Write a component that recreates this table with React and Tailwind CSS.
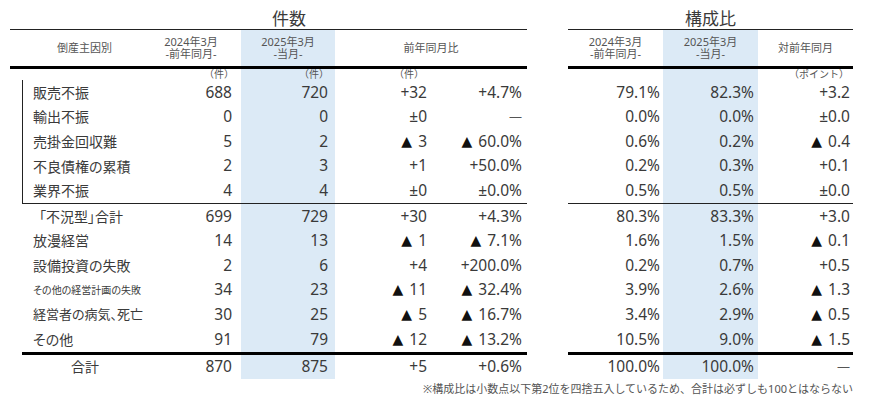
import React from "react";

const rows1 = [
  ["販売不振", "688", "720", "+32", "+4.7%", "79.1%", "82.3%", "+3.2"],
  ["輸出不振", "0", "0", "±0", "—", "0.0%", "0.0%", "±0.0"],
  ["売掛金回収難", "5", "2", "▲ 3", "▲ 60.0%", "0.6%", "0.2%", "▲ 0.4"],
  ["不良債権の累積", "2", "3", "+1", "+50.0%", "0.2%", "0.3%", "+0.1"],
  ["業界不振", "4", "4", "±0", "±0.0%", "0.5%", "0.5%", "±0.0"],
];
const rows2 = [
  ["「不況型」合計", "699", "729", "+30", "+4.3%", "80.3%", "83.3%", "+3.0", "sum"],
  ["放漫経営", "14", "13", "▲ 1", "▲ 7.1%", "1.6%", "1.5%", "▲ 0.1"],
  ["設備投資の失敗", "2", "6", "+4", "+200.0%", "0.2%", "0.7%", "+0.5"],
  ["その他の経営計画の失敗", "34", "23", "▲ 11", "▲ 32.4%", "3.9%", "2.6%", "▲ 1.3", "small"],
  ["経営者の病気、死亡", "30", "25", "▲ 5", "▲ 16.7%", "3.4%", "2.9%", "▲ 0.5", "long"],
  ["その他", "91", "79", "▲ 12", "▲ 13.2%", "10.5%", "9.0%", "▲ 1.5"],
];
const total = ["合計", "870", "875", "+5", "+0.6%", "100.0%", "100.0%", "—"];

function V({ s }) {
  if (s.startsWith("▲ ")) {
    return (
      <span className="whitespace-nowrap">
        <span className="font-['DejaVu_Sans',sans-serif] text-[14px] mr-[6px] text-[#111] relative top-[-1px]">▲</span>
        {s.slice(2)}
      </span>
    );
  }
  if (s === "—") {
    return <span className="text-[13px] text-[#555]">—</span>;
  }
  return <span className="whitespace-nowrap">{s}</span>;
}

function LeftRow({ r, labelW, labelCls }) {
  return (
    <div className="flex h-[24.6px] items-center text-[15.5px]">
      <div className={`h-full flex items-center whitespace-nowrap [font-feature-settings:'palt'] ${labelW} ${labelCls}`}>{r[0]}</div>
      <div className="h-full w-[100px] flex items-center justify-end pr-[9px]"><V s={r[1]} /></div>
      <div className="h-full w-[94px] flex items-center justify-end pr-[7px] bg-[#dceaf6]"><V s={r[2]} /></div>
      <div className="h-full w-[95px] flex items-center justify-end pr-[3px]"><V s={r[3]} /></div>
      <div className="h-full w-[97px] flex items-center justify-end pr-[5px]"><V s={r[4]} /></div>
    </div>
  );
}

function RightRow({ r }) {
  return (
    <div className="flex h-[24.6px] items-center text-[15.5px]">
      <div className="h-full w-[95px] flex items-center justify-end pr-[3px]"><V s={r[5]} /></div>
      <div className="h-full w-[95px] flex items-center justify-end pr-[4px] bg-[#dceaf6]"><V s={r[6]} /></div>
      <div className="h-full w-[95px] flex items-center justify-end pr-[3px]"><V s={r[7]} /></div>
    </div>
  );
}

function labelClass(r) {
  if (r[8] === "sum") return "pl-[17px] text-[14px]";
  if (r[8] === "small") return "pl-[11px] text-[10px]";
  if (r[8] === "long") return "pl-[11px] text-[13px]";
  return "pl-[11px] text-[14px]";
}

function Head2({ a, b, w, blue }) {
  return (
    <div className={`${w} flex flex-col items-center justify-center ${blue ? "bg-[#dceaf6]" : ""}`}>
      <span className="block h-[12.5px] leading-[12.5px]">{a}</span>
      <span className="block h-[12.5px] leading-[12.5px]">{b}</span>
    </div>
  );
}

export default function App() {
  return (
    <div className="w-[870px] h-[405px] overflow-hidden bg-white text-[#3a3a3a] font-['Noto_Sans','Noto_Sans_CJK_JP',sans-serif] pl-[10px]">
      <div className="flex h-[29px]">
        <div className="w-[558px] text-center text-[17px] leading-[22px] pt-[7px] font-['Noto_Sans_CJK_JP',sans-serif]">件数</div>
        <div className="w-[285px] text-center text-[17px] leading-[22px] pt-[7px] font-['Noto_Sans_CJK_JP',sans-serif]">構成比</div>
      </div>
      <div className="flex">
        {/* Left table */}
        <div className="w-[517px]">
          <div className="flex h-[37px] border-t border-[#222] text-[11px] text-[#555]">
            <div className="w-[131px] flex items-center justify-center pl-[18px]">倒産主因別</div>
            <Head2 a="2024年3月" b="-前年同月-" w="w-[100px]" />
            <Head2 a="2025年3月" b="-当月-" w="w-[94px]" blue />
            <div className="w-[192px] flex items-center justify-center">前年同月比</div>
          </div>
          <div className="h-[3px] bg-black"></div>
          <div className="flex h-[11px] text-[10px] leading-[11px] text-[#555]">
            <div className="w-[131px]"></div>
            <div className="w-[100px] text-right pr-[7px]">（件）</div>
            <div className="w-[94px] text-right pr-[6px] bg-[#dceaf6]">（件）</div>
            <div className="w-[95px] text-right pr-[6px]">（件）</div>
            <div className="w-[97px]"></div>
          </div>
          <div className="ml-[12px] border-l border-b border-[#222]">
            {rows1.map((r) => (
              <LeftRow key={r[0]} r={r} labelW="w-[118px]" labelCls="pl-[10px] text-[14px]" />
            ))}
          </div>
          <div className="ml-[12px] border-b-[3px] border-black">
            {rows2.map((r) => (
              <LeftRow key={r[0]} r={r} labelW="w-[119px]" labelCls={labelClass(r)} />
            ))}
          </div>
          <LeftRow r={total} labelW="w-[131px]" labelCls="pl-[61px] text-[14px]" />
        </div>
        <div className="w-[41px]"></div>
        {/* Right table */}
        <div className="w-[285px]">
          <div className="flex h-[37px] border-t border-[#222] text-[11px] text-[#555]">
            <Head2 a="2024年3月" b="-前年同月-" w="w-[95px]" />
            <Head2 a="2025年3月" b="-当月-" w="w-[95px]" blue />
            <div className="w-[95px] flex items-center justify-center">対前年同月</div>
          </div>
          <div className="h-[3px] bg-black"></div>
          <div className="flex h-[11px] text-[10px] leading-[11px] text-[#555]">
            <div className="w-[95px]"></div>
            <div className="w-[95px] bg-[#dceaf6]"></div>
            <div className="w-[95px] text-right pr-[4px]">（ポイント）</div>
          </div>
          <div className="border-b border-[#222]">
            {rows1.map((r) => (
              <RightRow key={r[0]} r={r} />
            ))}
          </div>
          <div className="border-b-[3px] border-black">
            {rows2.map((r) => (
              <RightRow key={r[0]} r={r} />
            ))}
          </div>
          <RightRow r={total} />
        </div>
      </div>
      <div className="w-[843px] text-right text-[11px] text-[#555] leading-[14px] pt-[3px]">
        ※構成比は小数点以下第2位を四捨五入しているため、合計は必ずしも100とはならない
      </div>
    </div>
  );
}
